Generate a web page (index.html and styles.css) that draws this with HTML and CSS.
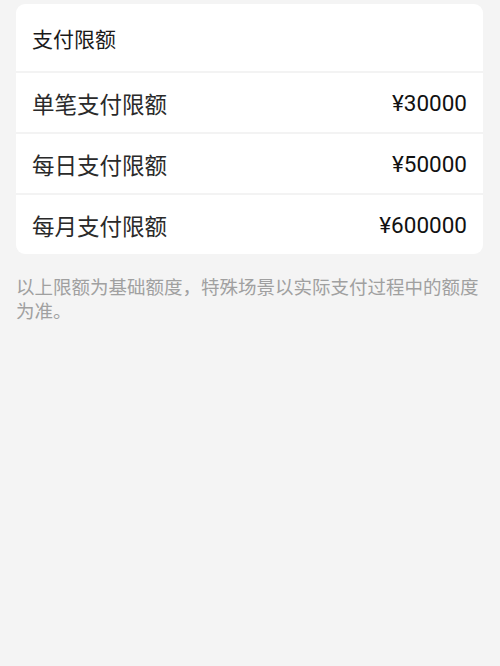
FILE: index.html
```html
<!DOCTYPE html>
<html lang="zh-CN">
<head>
<meta charset="utf-8">
<title>支付限额</title>
<link rel="stylesheet" href="styles.css">
</head>
<body>
  <section class="card">
    <div class="card-title">支付限额</div>
    <div class="row">
      <span class="label">单笔支付限额</span>
      <span class="value">¥30000</span>
    </div>
    <div class="row">
      <span class="label">每日支付限额</span>
      <span class="value">¥50000</span>
    </div>
    <div class="row">
      <span class="label">每月支付限额</span>
      <span class="value">¥600000</span>
    </div>
  </section>
  <p class="note">以上限额为基础额度，特殊场景以实际支付过程中的额度为准。</p>
</body>
</html>
```

FILE: styles.css
```css
html, body {
  margin: 0;
  padding: 0;
}

body {
  background: #f4f4f4;
  font-family: "Noto Sans CJK SC", "Noto Sans", sans-serif;
  color: #1f1f1f;
  width: 500px;
  min-height: 666px;
}

/* the gaps between rows show the separator tone */
.card {
  margin: 4px 17px 0 16px;
  background: #f3f3f3;
  border-radius: 9px;
  display: flex;
  flex-direction: column;
  gap: 2px;
  overflow: hidden;
}

.card-title,
.row {
  background: #ffffff;
  padding: 0 16px;
  display: flex;
  align-items: center;
}

.card-title {
  height: 67px;
  font-size: 21px;
  color: #1a1a1a;
}

.row {
  height: 59px;
  justify-content: space-between;
}

.label {
  font-size: 22.5px;
  color: #2a2a2a;
}

.value {
  font-family: Roboto, "Noto Sans", sans-serif;
  font-size: 22.5px;
  font-weight: 450;
  color: #111111;
}

.note {
  margin: 20px 16px 0 16px;
  font-size: 18.5px;
  line-height: 24px;
  color: #a0a0a0;
}
```
